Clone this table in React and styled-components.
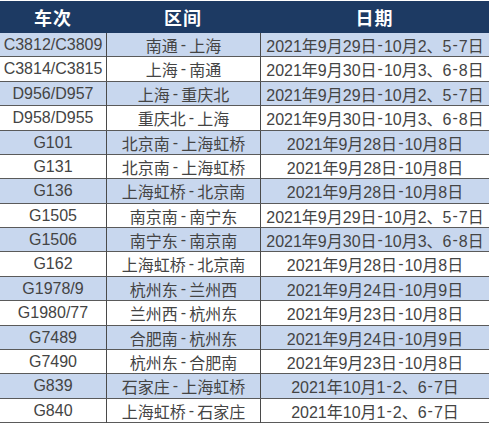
import React from "react";
import styled, { createGlobalStyle } from "styled-components";

const GlobalStyle = createGlobalStyle`
  html, body {
    margin: 0;
    padding: 0;
    background: #ffffff;
  }
  body {
    font-family: "Liberation Sans", "Noto Sans CJK SC", sans-serif;
  }
`;

const StyledTable = styled.div`
  width: 489px;
  padding-top: 1px;
  display: flex;
  flex-direction: column;
`;

const StyledHead = styled.div`
  display: grid;
  grid-template-columns: 106px 154px 1fr;
  height: 32px;
  background: #1d3a63;
  color: #ffffff;
  font-weight: bold;
  font-size: 18px;
`;

const StyledHeadCell = styled.div`
  display: flex;
  align-items: center;
  justify-content: center;
  letter-spacing: 1px;
`;

const StyledRow = styled.div`
  display: grid;
  grid-template-columns: 106px 154px 1fr;
  height: 24.375px;
  box-sizing: border-box;
  border-bottom: 1px solid #5a5a5a;
  background: ${p => (p.$shaded ? "#c8d7ee" : "#ffffff")};
  color: #444444;
  font-size: 16px;
`;

const StyledCell = styled.div`
  display: flex;
  align-items: center;
  justify-content: center;
  white-space: nowrap;
  border-left: ${p => (p.$first ? "none" : "1px solid #4a4a4a")};
`;

const StyledDash = styled.span`
  margin: 0 ${p => (p.$wide ? "3px" : "1px")};
`;

// puts a little air around each hyphen, as the source sheet does
const spaced = (text, wide) =>
  text.split("-").map((part, i) => (
    <React.Fragment key={i}>
      {i > 0 && <StyledDash $wide={wide}>-</StyledDash>}
      {part}
    </React.Fragment>
  ));

const rows = [
  ["C3812/C3809", "南通-上海", "2021年9月29日-10月2、5-7日"],
  ["C3814/C3815", "上海-南通", "2021年9月30日-10月3、6-8日"],
  ["D956/D957", "上海-重庆北", "2021年9月29日-10月2、5-7日"],
  ["D958/D955", "重庆北-上海", "2021年9月30日-10月3、6-8日"],
  ["G101", "北京南-上海虹桥", "2021年9月28日-10月8日"],
  ["G131", "北京南-上海虹桥", "2021年9月28日-10月8日"],
  ["G136", "上海虹桥-北京南", "2021年9月28日-10月8日"],
  ["G1505", "南京南-南宁东", "2021年9月29日-10月2、5-7日"],
  ["G1506", "南宁东-南京南", "2021年9月30日-10月3、6-8日"],
  ["G162", "上海虹桥-北京南", "2021年9月28日-10月8日"],
  ["G1978/9", "杭州东-兰州西", "2021年9月24日-10月9日"],
  ["G1980/77", "兰州西-杭州东", "2021年9月23日-10月8日"],
  ["G7489", "合肥南-杭州东", "2021年9月24日-10月9日"],
  ["G7490", "杭州东-合肥南", "2021年9月23日-10月8日"],
  ["G839", "石家庄-上海虹桥", "2021年10月1-2、6-7日"],
  ["G840", "上海虹桥-石家庄", "2021年10月1-2、6-7日"]
];

const App = () => {
  return (
    <>
      <GlobalStyle />
      <StyledTable>
        <StyledHead>
          <StyledHeadCell>车次</StyledHeadCell>
          <StyledHeadCell>区间</StyledHeadCell>
          <StyledHeadCell>日期</StyledHeadCell>
        </StyledHead>
        {rows.map((r, i) => (
          <StyledRow key={r[0]} $shaded={i % 2 === 0}>
            <StyledCell $first>{r[0]}</StyledCell>
            <StyledCell>{spaced(r[1], true)}</StyledCell>
            <StyledCell>{spaced(r[2], false)}</StyledCell>
          </StyledRow>
        ))}
      </StyledTable>
    </>
  );
};

export default App;
